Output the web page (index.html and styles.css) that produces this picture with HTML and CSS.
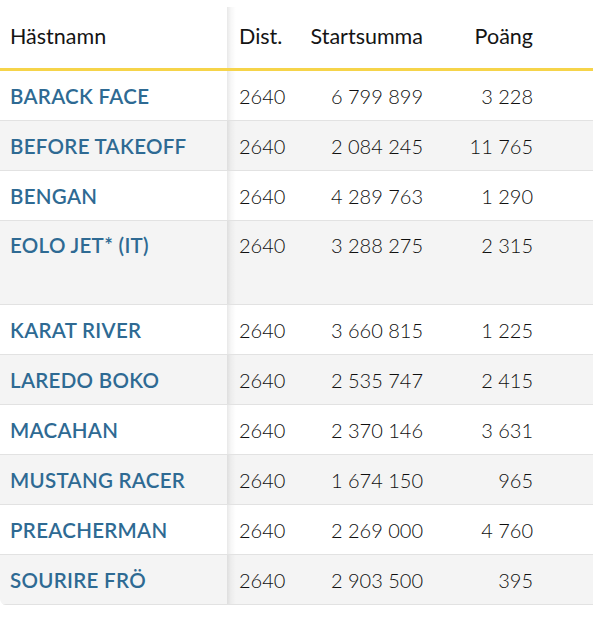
FILE: index.html
```html
<!DOCTYPE html>
<html lang="sv">
<head>
<meta charset="utf-8">
<link rel="stylesheet" href="styles.css">
</head>
<body>
<div class="table-wrap">
<table class="horses">
<thead>
<tr>
<th class="name">Hästnamn</th>
<th class="dist">Dist.</th>
<th class="num sum">Startsumma</th>
<th class="num pts">Poäng</th>
<th class="fill"></th>
</tr>
</thead>
<tbody>
<tr><td class="name">BARACK FACE</td><td class="dist">2640</td><td class="num">6 799 899</td><td class="num">3 228</td><td class="fill"></td></tr>
<tr><td class="name">BEFORE TAKEOFF</td><td class="dist">2640</td><td class="num">2 084 245</td><td class="num">11 765</td><td class="fill"></td></tr>
<tr><td class="name">BENGAN</td><td class="dist">2640</td><td class="num">4 289 763</td><td class="num">1 290</td><td class="fill"></td></tr>
<tr class="tall"><td class="name">EOLO JET* (IT)</td><td class="dist">2640</td><td class="num">3 288 275</td><td class="num">2 315</td><td class="fill"></td></tr>
<tr><td class="name">KARAT RIVER</td><td class="dist">2640</td><td class="num">3 660 815</td><td class="num">1 225</td><td class="fill"></td></tr>
<tr><td class="name">LAREDO BOKO</td><td class="dist">2640</td><td class="num">2 535 747</td><td class="num">2 415</td><td class="fill"></td></tr>
<tr><td class="name">MACAHAN</td><td class="dist">2640</td><td class="num">2 370 146</td><td class="num">3 631</td><td class="fill"></td></tr>
<tr><td class="name">MUSTANG RACER</td><td class="dist">2640</td><td class="num">1 674 150</td><td class="num">965</td><td class="fill"></td></tr>
<tr><td class="name">PREACHERMAN</td><td class="dist">2640</td><td class="num">2 269 000</td><td class="num">4 760</td><td class="fill"></td></tr>
<tr><td class="name">SOURIRE FRÖ</td><td class="dist">2640</td><td class="num">2 903 500</td><td class="num">395</td><td class="fill"></td></tr>
</tbody>
</table>
</div>
</body>
</html>
```

FILE: styles.css
```css
html, body {
  margin: 0;
  padding: 0;
  background: #ffffff;
}

body {
  font-family: Lato, "Open Sans", sans-serif;
  color: #1c1c1c;
}

.table-wrap {
  margin-top: 7px;
  width: 593px;
  overflow: hidden;
  border-radius: 0 0 0 6px;
}

.horses {
  border-collapse: separate;
  border-spacing: 0;
  width: 100%;
  table-layout: fixed;
}

.horses th,
.horses td {
  padding: 0 12px;
  text-align: left;
  white-space: nowrap;
  font-size: 20px;
  line-height: 24px;
}

.horses th {
  height: 58px;
  padding-bottom: 3px;
  font-size: 21.5px;
  font-weight: 400;
  color: #141414;
  border-bottom: 3px solid #f6d44a;
  vertical-align: middle;
}

.horses td {
  height: 49px;
  border-bottom: 1px solid #e2e2e2;
  vertical-align: middle;
  font-weight: 300;
  color: #0f0f0f;
}

.horses tbody tr:nth-child(even) td {
  background-color: #f4f4f4;
}

.horses tbody tr.tall td {
  height: 71px;
  vertical-align: top;
  padding-top: 12px;
}

.horses .name {
  width: 205px;
  padding-left: 10px;
}

.horses td.name {
  color: #2e6a93;
  font-size: 20.5px;
  font-weight: 600;
  letter-spacing: 0.3px;
}

.horses .dist {
  width: 45px;
  background-image: linear-gradient(to right, rgba(0, 0, 0, 0.09), rgba(0, 0, 0, 0.03) 4px, rgba(0, 0, 0, 0) 9px);
}

.horses .num {
  text-align: right;
}

.horses .sum {
  width: 115px;
}

.horses th.num {
  text-align: right;
}

.horses th:nth-child(4),
.horses td:nth-child(4) {
  width: 86px;
}

.horses .fill {
  width: auto;
  padding: 0;
}
```
